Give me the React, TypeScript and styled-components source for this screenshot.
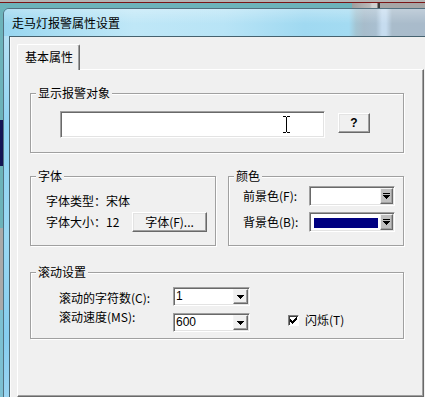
import styled, { createGlobalStyle } from "styled-components";

const GlobalStyle = createGlobalStyle`
  html, body {
    margin: 0;
    padding: 0;
  }
  body {
    width: 425px;
    height: 397px;
    overflow: hidden;
    font-family: "Noto Sans CJK SC", "Noto Sans", sans-serif;
    font-size: 12px;
    line-height: 14px;
    color: #000;
  }
  * {
    box-sizing: border-box;
  }
`;

const Desktop = styled.div`
  width: 425px;
  height: 397px;
  overflow: hidden;
  padding: 8px 0 0 3px;
  background:
    linear-gradient(to right, transparent 352px, #9e9e9e 352px, #b8b8b8 370px, #d0d0d0 372px, #d0d0d0 377px, #3c3c3c 378px, #3c3c3c 380px, #a6a6a6 380px) 0 3px / 100% 5px no-repeat,
    linear-gradient(to bottom, #b4b4b4 0 2px, #7b1616 2px 3px, #6cb3ba 3px 120px, #131454 120px 166px, #6cb3ba 166px 228px, #a9a9a9 228px 310px, #7cc0d2 310px);
`;

const Window = styled.div`
  width: 440px;
  height: 400px;
  border: 1px solid #52707f;
  border-radius: 6px 6px 0 0;
  overflow: hidden;
  display: flex;
  flex-direction: column;
  background: #93d3ef;
`;

const TitleBar = styled.div`
  flex: none;
  height: 27px;
  padding-left: 8px;
  line-height: 27px;
  background:
    linear-gradient(to bottom, rgba(255, 255, 255, 0.28), rgba(255, 255, 255, 0) 55%),
    linear-gradient(to right, #98d6f0 0, #a6dcf2 40px, #bfe7f7 130px, #b8e4f6 220px, #a0d9f1 300px, #a3dbf2 345px, #a4c5d3 352px, #a7bccb 360px, #a9bfd0 372px, #c6dcef 378px, #c6dcef 382px, #a9bccb 388px, #a9bacb 440px);
`;

const Frame = styled.div`
  flex: 1;
  display: flex;
  padding-left: 5px;
  background: linear-gradient(to bottom, #b5e1f4 0, #8fd4f2 90px, #9ad8f3 200px, #86cdef 300px, #9cd6f2 100%);
`;

const Client = styled.div`
  flex: 1;
  padding: 7px 0 0 7px;
  background: #f0f0f0;
  border-top: 1px solid #46626f;
  border-left: 1px solid #46626f;
  box-shadow: inset 1px 0 0 #fbfbfb;
`;

const TabStrip = styled.div`
  display: flex;
  height: 25px;
`;

const Tab = styled.div`
  position: relative;
  z-index: 1;
  width: 63px;
  height: 26px;
  padding: 5px 0 0 7px;
  background: #f0f0f0;
  border-top: 1px solid #fff;
  border-left: 1px solid #fff;
  border-right: 1px solid #696969;
  border-radius: 2px 2px 0 0;
  box-shadow: inset -1px 0 0 #a0a0a0;
`;

const TabPanel = styled.div`
  width: 407px;
  height: 328px;
  padding: 0 0 0 12px;
  display: flex;
  flex-direction: column;
  border: 1px solid;
  border-color: #fff #696969 #696969 #fff;
  box-shadow: inset -1px -1px 0 #a0a0a0;
`;

const GroupBox = styled.div<{ $w: number; $h: number; $mt: number }>`
  position: relative;
  flex: none;
  width: ${(p) => p.$w}px;
  height: ${(p) => p.$h}px;
  margin-top: ${(p) => p.$mt}px;
  border: 1px solid #a0a0a0;
  box-shadow: inset 1px 1px 0 #fff, 1px 1px 0 #fff;
`;

const Caption = styled.span`
  position: absolute;
  top: -8px;
  left: 5px;
  padding: 0 2px;
  background: #f0f0f0;
  white-space: nowrap;
`;

const GroupRow = styled.div`
  display: flex;
  gap: 12px;
  margin-top: 23px;
`;

const Button = styled.button<{ $w: number }>`
  flex: none;
  width: ${(p) => p.$w}px;
  height: 20px;
  margin: 0;
  padding: 0;
  font: inherit;
  line-height: 14px;
  color: #000;
  background: #f0f0f0;
  border: 1px solid;
  border-color: #fff #696969 #696969 #fff;
  box-shadow: inset -1px -1px 0 #a0a0a0, inset 1px 1px 0 #e3e3e3;
`;

const Sunken = styled.div<{ $w: number; $h: number }>`
  position: relative;
  flex: none;
  width: ${(p) => p.$w}px;
  height: ${(p) => p.$h}px;
  padding: 1px;
  display: flex;
  align-items: stretch;
  background: #fff;
  border: 1px solid;
  border-color: #a0a0a0 #fff #fff #a0a0a0;
  box-shadow: inset 1px 1px 0 #696969, inset -1px -1px 0 #e3e3e3;
`;

/* 显示报警对象 */
const ObjectBody = styled.div`
  display: flex;
  align-items: flex-start;
  gap: 13px;
  padding: 17px 0 0 29px;
`;

const HelpButton = styled(Button)`
  margin-top: 2px;
  font-family: "Liberation Sans", sans-serif;
  font-weight: bold;
  font-size: 12px;
`;

const IBeam = styled.svg`
  position: absolute;
  left: 222px;
  top: 4px;
`;

/* 字体 */
const FontBody = styled.div`
  display: flex;
  flex-direction: column;
  gap: 4px;
  padding: 17px 8px 0 15px;
`;

const FontRow = styled.div`
  display: flex;
  align-items: center;
  justify-content: space-between;
  white-space: nowrap;
`;

/* 颜色 */
const ColorBody = styled.div`
  display: grid;
  grid-template-columns: 1fr 86px;
  row-gap: 6px;
  align-items: center;
  padding: 9px 8px 0 14px;
  white-space: nowrap;
`;

const Swatch = styled.div<{ $color: string }>`
  flex: 1;
  margin: 4px 2px 2px 3px;
  background: ${(p) => p.$color};
`;

const DropButton = styled.div<{ $w: number; $face: string }>`
  flex: none;
  width: ${(p) => p.$w}px;
  display: flex;
  align-items: center;
  justify-content: center;
  background: ${(p) => p.$face};
  border: 1px solid;
  border-color: #f4f4f4 #696969 #696969 #f4f4f4;
  box-shadow: inset -1px -1px 0 #a0a0a0;
`;

/* 滚动设置 */
const ScrollBody = styled.div`
  display: flex;
  align-items: flex-start;
  padding-left: 28px;
`;

const Column = styled.div<{ $w: number; $top: number; $gap: number }>`
  flex: none;
  width: ${(p) => p.$w}px;
  padding-top: ${(p) => p.$top}px;
  display: flex;
  flex-direction: column;
  gap: ${(p) => p.$gap}px;
  white-space: nowrap;
`;

const ComboValue = styled.span`
  flex: 1;
  padding-left: 1px;
  font-family: "Liberation Sans", sans-serif;
  font-size: 12px;
  line-height: 15px;
`;

const CheckField = styled.label`
  display: flex;
  align-items: center;
  gap: 6px;
  margin: 40px 0 0 38px;
  white-space: nowrap;
`;

const CheckBox = styled.span`
  width: 11px;
  height: 11px;
  display: flex;
  align-items: center;
  justify-content: center;
  background: #fff;
  border: 1px solid;
  border-color: #808080 #fff #fff #808080;
  box-shadow: inset 1px 1px 0 #404040;
`;

const Arrow = ({ bar }: { bar?: boolean }) =>
  bar ? (
    <svg width="7" height="6" viewBox="0 0 7 6" shapeRendering="crispEdges">
      <rect x="0" y="0" width="7" height="1" fill="#000" />
      <rect x="0" y="2" width="7" height="1" fill="#000" />
      <rect x="1" y="3" width="5" height="1" fill="#000" />
      <rect x="2" y="4" width="3" height="1" fill="#000" />
      <rect x="3" y="5" width="1" height="1" fill="#000" />
    </svg>
  ) : (
    <svg width="7" height="4" viewBox="0 0 7 4" shapeRendering="crispEdges">
      <rect x="0" y="0" width="7" height="1" fill="#000" />
      <rect x="1" y="1" width="5" height="1" fill="#000" />
      <rect x="2" y="2" width="3" height="1" fill="#000" />
      <rect x="3" y="3" width="1" height="1" fill="#000" />
    </svg>
  );

function ColorCombo({ color }: { color: string }) {
  return (
    <Sunken $w={86} $h={20}>
      <Swatch $color={color} />
      <DropButton $w={13} $face="#c0c0c0">
        <Arrow bar />
      </DropButton>
    </Sunken>
  );
}

function ValueCombo({ value }: { value: string }) {
  return (
    <Sunken $w={77} $h={19}>
      <ComboValue>{value}</ComboValue>
      <DropButton $w={15} $face="#f0f0f0">
        <Arrow />
      </DropButton>
    </Sunken>
  );
}

export default function App() {
  return (
    <>
      <GlobalStyle />
      <Desktop>
        <Window>
          <TitleBar>走马灯报警属性设置</TitleBar>
          <Frame>
            <Client>
              <TabStrip>
                <Tab>基本属性</Tab>
              </TabStrip>
              <TabPanel>
                <GroupBox $w={374} $h={60} $mt={23}>
                  <Caption>显示报警对象</Caption>
                  <ObjectBody>
                    <Sunken $w={265} $h={27}>
                      <IBeam width="7" height="17" viewBox="0 0 7 17" shapeRendering="crispEdges">
                        <rect x="0" y="0" width="3" height="1" fill="#000" />
                        <rect x="4" y="0" width="3" height="1" fill="#000" />
                        <rect x="3" y="1" width="1" height="15" fill="#000" />
                        <rect x="0" y="16" width="3" height="1" fill="#000" />
                        <rect x="4" y="16" width="3" height="1" fill="#000" />
                      </IBeam>
                    </Sunken>
                    <HelpButton $w={32}>?</HelpButton>
                  </ObjectBody>
                </GroupBox>

                <GroupRow>
                  <GroupBox $w={186} $h={70} $mt={0}>
                    <Caption>字体</Caption>
                    <FontBody>
                      <FontRow>字体类型：宋体</FontRow>
                      <FontRow>
                        <span>字体大小：12</span>
                        <Button $w={75}>字体(F)...</Button>
                      </FontRow>
                    </FontBody>
                  </GroupBox>
                  <GroupBox $w={176} $h={70} $mt={0}>
                    <Caption>颜色</Caption>
                    <ColorBody>
                      <span>前景色(F):</span>
                      <ColorCombo color="#ffffff" />
                      <span>背景色(B):</span>
                      <ColorCombo color="#000080" />
                    </ColorBody>
                  </GroupBox>
                </GroupRow>

                <GroupBox $w={374} $h={67} $mt={26}>
                  <Caption>滚动设置</Caption>
                  <ScrollBody>
                    <Column $w={114} $top={18} $gap={5}>
                      <span>滚动的字符数(C):</span>
                      <span>滚动速度(MS):</span>
                    </Column>
                    <Column $w={77} $top={14} $gap={7}>
                      <ValueCombo value="1" />
                      <ValueCombo value="600" />
                    </Column>
                    <CheckField>
                      <CheckBox>
                        <svg width="7" height="7" viewBox="0 0 7 7" shapeRendering="crispEdges">
                          <rect x="0" y="2" width="1" height="3" fill="#000" />
                          <rect x="1" y="3" width="1" height="3" fill="#000" />
                          <rect x="2" y="4" width="1" height="3" fill="#000" />
                          <rect x="3" y="3" width="1" height="3" fill="#000" />
                          <rect x="4" y="2" width="1" height="3" fill="#000" />
                          <rect x="5" y="1" width="1" height="3" fill="#000" />
                          <rect x="6" y="0" width="1" height="3" fill="#000" />
                        </svg>
                      </CheckBox>
                      闪烁(T)
                    </CheckField>
                  </ScrollBody>
                </GroupBox>
              </TabPanel>
            </Client>
          </Frame>
        </Window>
      </Desktop>
    </>
  );
}
